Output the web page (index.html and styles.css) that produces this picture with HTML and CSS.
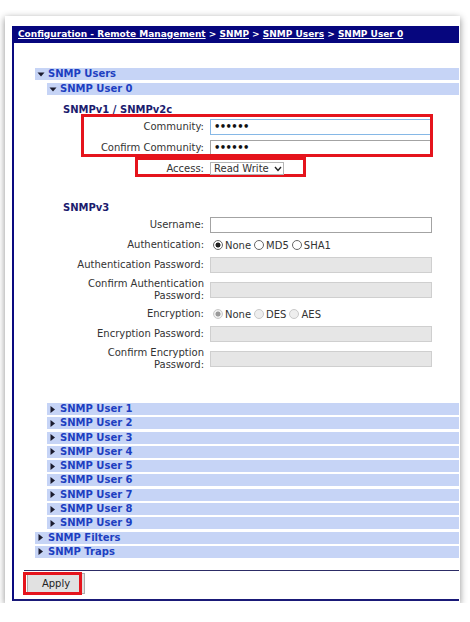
FILE: index.html
```html
<!DOCTYPE html>
<html lang="en">

<head>
    <meta charset="UTF-8">
    <title>SNMP User 0</title>
    <link rel="stylesheet" href="styles.css">
</head>

<body>
    <div class="window">
        <div class="crumbs">
            <a href="#">Configuration - Remote Management</a> &gt;
            <a href="#">SNMP</a> &gt;
            <a href="#">SNMP Users</a> &gt;
            <a href="#">SNMP User 0</a>
        </div>

        <div class="panel">
            <div class="tree">
                <div class="node">
                    <svg class="arrow" width="8" height="7" viewBox="0 0 8 7"><polygon points="0.5,1.5 7.5,1.5 4,5.5" /></svg>
                    SNMP Users
                </div>
                <div class="node sub">
                    <svg class="arrow" width="8" height="7" viewBox="0 0 8 7"><polygon points="0.5,1.5 7.5,1.5 4,5.5" /></svg>
                    SNMP User 0
                </div>

                <div class="user-form">
                    <div class="mark mark-community"></div>
                    <div class="mark mark-access"></div>

                    <h3>SNMPv1 / SNMPv2c</h3>
                    <div class="row v1">
                        <label for="txtCommunity">Community:</label>
                        <input type="password" id="txtCommunity" class="focused" value="public">
                    </div>
                    <div class="row v1">
                        <label for="txtConfirm">Confirm Community:</label>
                        <input type="password" id="txtConfirm" value="public">
                    </div>
                    <div class="row v1">
                        <label for="selAccess">Access:</label>
                        <span class="select-wrap">
                            <select id="selAccess">
                                <option>Read Write</option>
                                <option>Read Only</option>
                            </select>
                            <svg class="chevron" width="8" height="6" viewBox="0 0 8 6"><polyline points="1,1 4,4.5 7,1" /></svg>
                        </span>
                    </div>

                    <h3 class="v3">SNMPv3</h3>
                    <div class="row">
                        <label for="txtUser">Username:</label>
                        <input type="text" id="txtUser">
                    </div>
                    <div class="row">
                        <label>Authentication:</label>
                        <div class="radios">
                            <input type="radio" name="auth" checked><span>None</span>
                            <input type="radio" name="auth"><span>MD5</span>
                            <input type="radio" name="auth"><span>SHA1</span>
                        </div>
                    </div>
                    <div class="row">
                        <label>Authentication Password:</label>
                        <input type="password" disabled>
                    </div>
                    <div class="row">
                        <label>Confirm Authentication Password:</label>
                        <input type="password" disabled>
                    </div>
                    <div class="row">
                        <label>Encryption:</label>
                        <div class="radios">
                            <input type="radio" name="enc" checked disabled><span>None</span>
                            <input type="radio" name="enc" disabled><span>DES</span>
                            <input type="radio" name="enc" disabled><span>AES</span>
                        </div>
                    </div>
                    <div class="row">
                        <label>Encryption Password:</label>
                        <input type="password" disabled>
                    </div>
                    <div class="row">
                        <label>Confirm Encryption Password:</label>
                        <input type="password" disabled>
                    </div>
                </div>

                <div class="users">
                    <div class="node sub"><svg class="arrow" width="8" height="7" viewBox="0 0 8 7"><polygon points="1.5,0 6,3.5 1.5,7" /></svg>SNMP User 1</div>
                    <div class="node sub"><svg class="arrow" width="8" height="7" viewBox="0 0 8 7"><polygon points="1.5,0 6,3.5 1.5,7" /></svg>SNMP User 2</div>
                    <div class="node sub"><svg class="arrow" width="8" height="7" viewBox="0 0 8 7"><polygon points="1.5,0 6,3.5 1.5,7" /></svg>SNMP User 3</div>
                    <div class="node sub"><svg class="arrow" width="8" height="7" viewBox="0 0 8 7"><polygon points="1.5,0 6,3.5 1.5,7" /></svg>SNMP User 4</div>
                    <div class="node sub"><svg class="arrow" width="8" height="7" viewBox="0 0 8 7"><polygon points="1.5,0 6,3.5 1.5,7" /></svg>SNMP User 5</div>
                    <div class="node sub"><svg class="arrow" width="8" height="7" viewBox="0 0 8 7"><polygon points="1.5,0 6,3.5 1.5,7" /></svg>SNMP User 6</div>
                    <div class="node sub"><svg class="arrow" width="8" height="7" viewBox="0 0 8 7"><polygon points="1.5,0 6,3.5 1.5,7" /></svg>SNMP User 7</div>
                    <div class="node sub"><svg class="arrow" width="8" height="7" viewBox="0 0 8 7"><polygon points="1.5,0 6,3.5 1.5,7" /></svg>SNMP User 8</div>
                    <div class="node sub"><svg class="arrow" width="8" height="7" viewBox="0 0 8 7"><polygon points="1.5,0 6,3.5 1.5,7" /></svg>SNMP User 9</div>
                    <div class="node"><svg class="arrow" width="8" height="7" viewBox="0 0 8 7"><polygon points="1.5,0 6,3.5 1.5,7" /></svg>SNMP Filters</div>
                    <div class="node"><svg class="arrow" width="8" height="7" viewBox="0 0 8 7"><polygon points="1.5,0 6,3.5 1.5,7" /></svg>SNMP Traps</div>
                </div>
            </div>

            <div class="footer">
                <div class="mark mark-apply"></div>
                <button class="apply">Apply</button>
            </div>
        </div>
    </div>
</body>

</html>
```

FILE: styles.css
```css
body {
    margin: 0;
    background: #ffffff;
    font-family: 'DejaVu Sans', Verdana, sans-serif;
    color: #333333;
}

.window {
    box-sizing: border-box;
    width: 455px;
    height: 587px;
    margin: 16px 0 0 5px;
    padding: 10px 1px 0 7px;
    background: #ffffff;
    box-shadow: 0 2px 7px rgba(0, 0, 0, 0.45);
}

.crumbs {
    height: 17px;
    padding-left: 6px;
    background: #06067e;
    color: #ffffff;
    font-size: 9px;
    font-weight: bold;
    line-height: 17px;
    white-space: nowrap;
}

.crumbs a {
    color: #ffffff;
}

.panel {
    border-left: 2px solid #0a0a80;
    border-bottom: 2px solid #1a1a78;
    padding-top: 25px;
}

.tree {
    padding-left: 21px;
}

.node {
    display: flex;
    align-items: center;
    height: 12px;
    margin-bottom: 3px;
    background: #c6d4f6;
    color: #1d3fc1;
    font-size: 10px;
    font-weight: bold;
    line-height: 12px;
    white-space: nowrap;
}

.node.sub {
    margin-left: 12px;
}

.arrow {
    margin: 0 3px 0 2px;
    fill: #1b1b2e;
}

/* user 0 form */

.user-form {
    position: relative;
    padding: 6px 0 0 28px;
}

.user-form h3 {
    margin: 0;
    font-size: 10px;
    line-height: 12px;
    color: #1c1c6e;
}

.user-form h3.v3 {
    margin: 23px 0 1px 0;
}

.row {
    display: flex;
    align-items: center;
    min-height: 20px;
}

.row.v1 {
    min-height: 21px;
}

.row label {
    box-sizing: border-box;
    width: 147px;
    padding: 2.5px 6px 2.5px 5px;
    text-align: right;
    font-size: 10px;
    line-height: 12px;
    color: #333333;
}

.row input[type="text"],
.row input[type="password"] {
    box-sizing: border-box;
    width: 222px;
    height: 16px;
    margin: 0;
    padding: 0 3px;
    border: 1px solid #a3a3a3;
    background: #ffffff;
    font-family: 'DejaVu Sans', Verdana, sans-serif;
    font-size: 10px;
    font-weight: bold;
    letter-spacing: -0.6px;
    color: #111111;
    outline: none;
}

.row input.focused {
    border-color: #86b8e6;
}

.row input:disabled {
    background: #e6e6e6;
    border-color: #cfcfcf;
}

.select-wrap {
    position: relative;
    display: flex;
}

.select-wrap select {
    display: block;
    appearance: none;
    width: 74px;
    height: 13px;
    margin: 0;
    padding: 0 0 0 3px;
    border: 1px solid #b5b5b5;
    border-radius: 0;
    background: #ffffff;
    font-family: 'DejaVu Sans', Verdana, sans-serif;
    font-size: 10px;
    line-height: 11px;
    color: #333333;
}

.chevron {
    position: absolute;
    top: 4px;
    left: 64px;
    fill: none;
    stroke: #222222;
    stroke-width: 1.4;
}

.radios {
    display: flex;
    align-items: center;
    font-size: 10px;
    color: #333333;
}

.radios input {
    appearance: none;
    box-sizing: border-box;
    width: 10px;
    height: 10px;
    margin: 0 2px 0 3px;
    border: 1px solid #666666;
    border-radius: 50%;
    background: #ffffff;
}

.radios input:checked {
    background: radial-gradient(circle, #222222 0 2.2px, #ffffff 2.8px);
}

.radios input:disabled {
    border-color: #c9c9c9;
    background: #eeeeee;
}

.radios input:disabled:checked {
    background: radial-gradient(circle, #9a9a9a 0 2.2px, #eeeeee 2.8px);
}

/* red highlight boxes */

.mark {
    position: absolute;
    box-sizing: border-box;
    border: 3px solid #e5141c;
    pointer-events: none;
}

.mark-community {
    top: 16px;
    left: 46px;
    width: 352px;
    height: 43px;
}

.mark-access {
    top: 59px;
    left: 100px;
    width: 171px;
    height: 20px;
}

.users {
    margin-top: 30px;
}

.users .node {
    margin-bottom: 2.3px;
}

.footer {
    position: relative;
    margin: 12px 0 0 10px;
    padding: 2px 0 5px 3px;
    border-top: 1px solid #2c2c66;
}

.mark-apply {
    top: 1px;
    left: -1px;
    width: 59px;
    height: 23px;
    z-index: 1;
}

.apply {
    display: block;
    width: 58px;
    height: 21px;
    border: 1px solid #adadad;
    background: #e1e1e1;
    font-family: 'DejaVu Sans', Verdana, sans-serif;
    font-size: 10px;
    color: #222222;
}
```
